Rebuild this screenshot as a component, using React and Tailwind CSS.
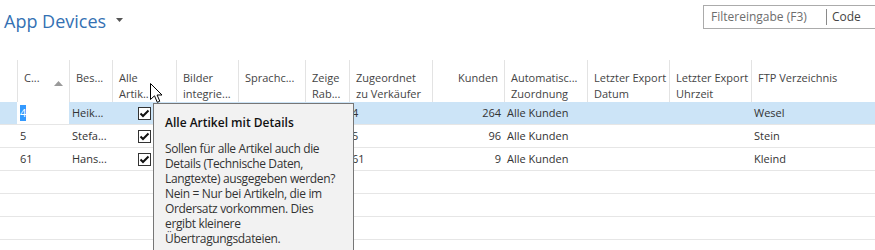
import React from 'react';

const columns = [
  { w: 17, lines: [] },
  { w: 52, lines: ['C...'], sort: true },
  { w: 43, lines: ['Bes...'] },
  { w: 64, lines: ['Alle', 'Artik..'], check: true },
  { w: 62, lines: ['Bilder', 'integrie...'] },
  { w: 67, lines: ['Sprachc...'] },
  { w: 44, lines: ['Zeige', 'Rab...'] },
  { w: 83, lines: ['Zugeordnet', 'zu Verkäufer'] },
  { w: 72, lines: ['Kunden'], right: true },
  { w: 83, lines: ['Automatisc...', 'Zuordnung'] },
  { w: 82, lines: ['Letzter Export', 'Datum'] },
  { w: 82, lines: ['Letzter Export', 'Uhrzeit'] },
  { w: 124, lines: ['FTP Verzeichnis'] },
];

const rows = [
  ['', '4', 'Heik...', true, '', '', '', '4', '264', 'Alle Kunden', '', '', 'Wesel'],
  ['', '5', 'Stefa...', true, '', '', '', '5', '96', 'Alle Kunden', '', '', 'Stein'],
  ['', '61', 'Hans...', true, '', '', '', '61', '9', 'Alle Kunden', '', '', 'Kleind'],
  [],
  [],
  [],
];

function CheckBox() {
  return (
    <div className="w-[13px] h-[13px] border border-[#333] bg-white flex items-center justify-center">
      <svg width="11" height="11" viewBox="0 0 11 11">
        <path d="M1.5 5.5 L4 8 L9.5 2.5" fill="none" stroke="#111" strokeWidth="2" />
      </svg>
    </div>
  );
}

export default function App() {
  return (
    <div className="w-[875px] h-[250px] bg-white relative overflow-hidden font-['Open_Sans',sans-serif] text-[11px] text-[#333]">
      {/* Title bar */}
      <div className="flex h-[60px]">
        <div className="flex items-start pl-[4px] pt-[8px]">
          <span className="text-[18px] leading-[26px] text-[#3471b3]">App Devices</span>
          <svg className="ml-[10px] mt-[10px]" width="7" height="4" viewBox="0 0 7 4">
            <path d="M0 0 L7 0 L3.5 4 Z" fill="#555" />
          </svg>
        </div>
        <div className="ml-auto mt-[5px] w-[172px] h-[24px] border border-r-0 border-[#ababab] flex items-center text-[12px]">
          <span className="pl-[7px] w-[122px] text-[#6d6d6d]">Filtereingabe (F3)</span>
          <span className="h-[16px] border-l border-[#8a8a8a]" />
          <span className="pl-[5px] text-[#444]">Code</span>
        </div>
      </div>

      {/* Header */}
      <div className="flex h-[42px]">
        {columns.map((c, i) => (
          <div
            key={i}
            style={{ width: c.w }}
            className={`shrink-0 relative pt-[10px] px-[6px] leading-[16px] text-[#444] whitespace-nowrap ${i > 0 ? 'border-l border-[#e3e3e3]' : ''} ${c.right ? 'text-right' : ''}`}
          >
            {c.lines.map((l, j) => (
              <div key={j}>{l}</div>
            ))}
            {c.sort && (
              <svg className="absolute left-[36px] top-[21px]" width="9" height="5" viewBox="0 0 9 5">
                <path d="M0 5 L4.5 0 L9 5 Z" fill="#9a9a9a" />
              </svg>
            )}
          </div>
        ))}
      </div>

      {/* Rows */}
      {rows.map((r, ri) => (
        <div
          key={ri}
          className={`flex h-[23px] border-b border-[#e6e6e6] ${ri === 0 ? 'bg-[#cce4f7]' : ''}`}
        >
          {columns.map((c, ci) => {
            const v = r[ci];
            const editing = ri === 0 && ci === 1;
            return (
              <div
                key={ci}
                style={{ width: c.w }}
                className={`shrink-0 flex items-center px-[3px] whitespace-nowrap ${c.right ? 'justify-end' : ''} ${c.check ? 'justify-center' : ''} ${editing ? 'bg-white' : ''}`}
              >
                {c.check && v ? (
                  <CheckBox />
                ) : editing ? (
                  <span className="bg-[#3399ff] text-white leading-[16px]">{v}</span>
                ) : v ? (
                  <span>{v}</span>
                ) : null}
              </div>
            );
          })}
        </div>
      ))}

      {/* Tooltip */}
      <div className="absolute left-[153px] top-[103px] w-[201px] h-[160px] bg-[#f2f2f2] border border-[#767676] pl-[11px] pt-[11px] whitespace-nowrap">
        <div className="font-semibold text-[12px] text-[#111] leading-[16px]">Alle Artikel mit Details</div>
        <div className="mt-[10px] leading-[15px] text-[12px] text-[#333] tracking-[-0.35px]">
          Sollen für alle Artikel auch die<br />
          Details (Technische Daten,<br />
          Langtexte) ausgegeben werden?<br />
          Nein = Nur bei Artikeln, die im<br />
          Ordersatz vorkommen. Dies<br />
          ergibt kleinere<br />
          Übertragungsdateien.
        </div>
      </div>

      {/* Mouse cursor */}
      <svg className="absolute left-[150px] top-[83px]" width="14" height="21" viewBox="0 0 14 21">
        <path d="M0.5 0.5 L0.5 16.5 L4.5 12.8 L7.3 19.3 L9.8 18.2 L7.1 12 L12 12 Z" fill="white" stroke="black" strokeWidth="1" strokeLinejoin="miter" />
      </svg>
    </div>
  );
}
